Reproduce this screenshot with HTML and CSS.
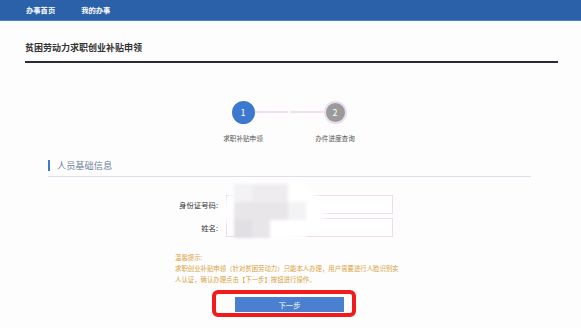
FILE: index.html
```html
<!DOCTYPE html>
<html lang="zh-CN">
<head>
  <meta charset="UTF-8">
  <meta name="viewport" content="width=device-width, initial-scale=1.0">
  <title>贫困劳动力求职创业补贴申领</title>
  <link rel="stylesheet" href="styles.css">
</head>
<body>
  <header class="topbar">
    <a class="nav-item" href="#">办事首页</a>
    <a class="nav-item" href="#">我的办事</a>
  </header>

  <main class="page">
    <h1 class="page-title">贫困劳动力求职创业补贴申领</h1>

    <div class="steps">
      <div class="step active">
        <span class="step-num">1</span>
        <span class="step-label">求职补贴申领</span>
      </div>
      <div class="step">
        <span class="step-num">2</span>
        <span class="step-label">办件进度查询</span>
      </div>
    </div>

    <section class="section">
      <h2 class="section-title">人员基础信息</h2>

      <div class="form">
        <label class="form-label" for="idcard">身份证号码:</label>
        <input class="form-input" id="idcard" type="text">
        <label class="form-label" for="name">姓名:</label>
        <input class="form-input" id="name" type="text">

        <div class="mosaic">
          <span class="m1"></span><span class="m2"></span><span class="m2"></span><span class="m0"></span>
          <span class="m3"></span><span class="m3"></span><span class="m3"></span><span class="m1"></span>
          <span class="m4"></span><span class="m3"></span><span class="m0"></span><span class="m0"></span>
        </div>
      </div>

      <div class="tips">
        <p>温馨提示:</p>
        <p>求职创业补贴申领（针对贫困劳动力）只能本人办理，用户需要进行人脸识别实人认证，确认办理点击【下一步】按钮进行操作。</p>
      </div>

      <div class="actions">
        <div class="btn-frame">
          <button class="next-btn">下一步</button>
        </div>
      </div>
    </section>
  </main>
</body>
</html>
```

FILE: styles.css
```css
* {
  margin: 0;
  padding: 0;
  box-sizing: border-box;
  font-family: 'Noto Sans CJK SC', 'Noto Sans', sans-serif;
}

body {
  background: #fdfdfd;
  color: #333;
}

.topbar {
  display: flex;
  align-items: center;
  gap: 26px;
  height: 21px;
  padding-left: 26px;
  background: #2b61a9;
  border-bottom: 1px solid #4d80c6;
}

.nav-item {
  color: #fff;
  font-size: 7.3px;
  font-weight: 700;
  text-decoration: none;
}

.page {
  padding: 0 23px 0 25px;
}

.page-title {
  margin-top: 20px;
  padding-bottom: 6px;
  font-size: 9px;
  line-height: 14px;
  font-weight: 700;
  color: #333;
  border-bottom: 2px solid #2a2b34;
}

.steps {
  display: flex;
  justify-content: center;
  margin: 38px 5px 0 0;
}

.step {
  position: relative;
  display: flex;
  flex-direction: column;
  align-items: center;
  width: 92px;
}

.step-num {
  display: flex;
  align-items: center;
  justify-content: center;
  width: 23px;
  height: 23px;
  border-radius: 50%;
  background: #9a9a9a;
  border: 2px solid #eedcee;
  color: #fff;
  font-size: 9px;
  position: relative;
  z-index: 1;
}

.step.active .step-num {
  background: #3d78cf;
  border-color: #3d78cf;
}

.step::after {
  content: '';
  position: absolute;
  top: 10px;
  height: 2px;
  background: #f0e0ef;
}

.step.active::after {
  left: 50%;
  right: 1px;
}

.step:not(.active)::after {
  left: 1px;
  right: 50%;
}

.step-label {
  margin-top: 9px;
  font-size: 6.6px;
  color: #555;
  white-space: nowrap;
}

.section {
  margin: 16px 27px 0 23px;
}

.section-title {
  display: flex;
  align-items: center;
  gap: 7px;
  padding-bottom: 5px;
  font-size: 9.2px;
  line-height: 12px;
  font-weight: 400;
  color: #6e7f9e;
  border-bottom: 1px solid #e3dbe9;
}

.section-title::before {
  content: '';
  width: 2px;
  height: 11px;
  background: #3d78cf;
}

.form {
  position: relative;
  display: grid;
  grid-template-columns: 170px 167px;
  column-gap: 8px;
  row-gap: 4px;
  align-items: center;
  margin-top: 18px;
}

.form-label {
  text-align: right;
  font-size: 7.4px;
  color: #333;
}

.form-input {
  height: 19px;
  border: 1px solid #eddcec;
  background: #fff;
  outline: none;
}

.mosaic {
  position: absolute;
  left: 172px;
  top: -13px;
  display: grid;
  grid-template-columns: repeat(4, 18px);
  grid-template-rows: repeat(3, 18px);
  padding: 2px 22px 2px 14px;
  border-radius: 50%;
  background: radial-gradient(ellipse at center, #fff 60%, rgba(255, 255, 255, 0) 78%);
  filter: blur(1.5px);
}

.m0 { background: #fff; }
.m1 { background: #f3f2f4; }
.m2 { background: #eeecef; }
.m3 { background: #e9e6ea; }
.m4 { background: #e1dfe3; }

.tips {
  margin: 15px 0 0 127px;
  width: 228px;
  font-size: 6.4px;
  line-height: 11px;
  color: #d8a33c;
}

.actions {
  display: flex;
  justify-content: center;
  margin-top: 5px;
  padding-right: 11px;
}

.btn-frame {
  display: flex;
  width: 144px;
  height: 27px;
  padding: 3px 8px 1px 19px;
  border: 4px solid #f21a1a;
  border-radius: 6px;
}

.next-btn {
  width: 109px;
  height: 15px;
  border: none;
  background: #4a80cf;
  color: #fff;
  font-size: 7.4px;
}
```
